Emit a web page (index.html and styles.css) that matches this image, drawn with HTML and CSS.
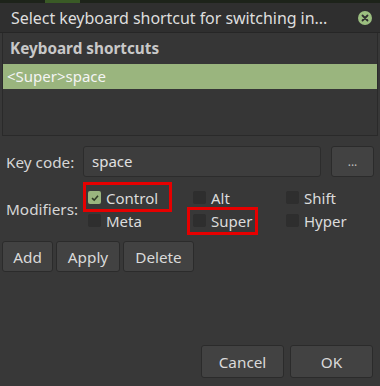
FILE: index.html
```html
<!DOCTYPE html>
<html>
<head>
<meta charset="utf-8">
<link rel="stylesheet" href="styles.css">
</head>
<body>
<div class="desk"><span class="leaf"></span></div>
<div class="dialog">
  <div class="titlebar">
    <span class="title">Select keyboard shortcut for switching in...</span>
    <span class="close"><svg width="14" height="14" viewBox="0 0 14 14"><circle cx="7" cy="7" r="7" fill="#9cbf80"/><path d="M4.5 4.5 L9.5 9.5 M9.5 4.5 L4.5 9.5" stroke="#2f2f2f" stroke-width="1.8" stroke-linecap="round"/></svg></span>
  </div>
  <div class="list">
    <div class="list-head">Keyboard shortcuts</div>
    <div class="list-row sel">&lt;Super&gt;space</div>
  </div>
  <div class="content">
    <div class="keyrow">
      <span class="lbl">Key code:</span>
      <div class="entry">space</div>
      <div class="btn dots">...</div>
    </div>
    <div class="modrow">
      <span class="lbl">Modifiers:</span>
      <div class="mods">
        <label class="chk hl hl-a"><span class="box on"><svg width="10" height="10" viewBox="0 0 10 10"><path d="M2 5.2 L4.2 7.2 L8 2.8" stroke="#2f3a26" stroke-width="1.6" fill="none"/></svg></span>Control</label>
        <label class="chk"><span class="box"></span>Alt</label>
        <label class="chk"><span class="box"></span>Shift</label>
        <label class="chk"><span class="box"></span>Meta</label>
        <label class="chk hl hl-b"><span class="box"></span>Super</label>
        <label class="chk"><span class="box"></span>Hyper</label>
      </div>
    </div>
    <div class="actions">
      <div class="btn w-add">Add</div>
      <div class="btn w-apply">Apply</div>
      <div class="btn w-delete">Delete</div>
    </div>
  </div>
  <div class="footer">
    <div class="btn big">Cancel</div>
    <div class="btn big">OK</div>
  </div>
</div>
</body>
</html>
```

FILE: styles.css
```css
html, body { margin: 0; padding: 0; }
body {
  width: 380px; height: 386px; overflow: hidden;
  background: #383838;
  font-family: "Noto Sans", "Open Sans", sans-serif;
  font-size: 15px;
  color: #dcdcdc;
}
.desk { height: 3px; background: #1d231a; position: relative; }
.leaf { position: absolute; left: 45px; top: 0; width: 35px; height: 3px; background: #3a5a26; }
.dialog { display: flex; flex-direction: column; height: 383px; }
.titlebar {
  height: 29px; background: #2f2f2f;
  display: flex; align-items: center; justify-content: space-between;
  padding: 0 8px 0 11px;
  border-bottom: 1px solid #262626;
}
.title { font-size: 16px; color: #dedede; letter-spacing: -0.05px; }
.close { display: flex; }
.list {
  margin: 0 2px; height: 102px;
  background: #363636;
  border: 1px solid #2a2a2a; border-top: none;
}
.list-head { height: 31px; line-height: 31px; padding-left: 7px; font-weight: bold; color: #c8c8c8; font-size: 15.3px; }
.list-row { height: 25px; line-height: 25px; padding-left: 4px; color: #f4f4f4; font-size: 15px; }
.list-row.sel { background: #9ab57e; }
.content { padding: 10px 4px 0 2px; }
.keyrow { display: flex; align-items: center; height: 31px; }
.lbl { width: 81px; padding-left: 4px; box-sizing: border-box; font-size: 15.3px; color: #d6d6d6; }
.entry {
  width: 238px; height: 31px; box-sizing: border-box;
  background: #3d3d3d; border: 1px solid #2c2c2c; border-radius: 3px;
  padding-left: 8px; line-height: 29px; font-size: 15px; color: #e0e0e0;
}
.btn {
  background: #424242; border: 1px solid #2b2b2b; border-radius: 3px;
  box-sizing: border-box; height: 31px;
  display: flex; align-items: center; justify-content: center;
  font-size: 15.3px; color: #dadada;
}
.dots { width: 43px; margin-left: 10px; font-size: 12px; color: #bdbdbd; }
.modrow { display: flex; align-items: center; margin-top: 7px; height: 50px; }
.mods { display: grid; grid-template-columns: 105px 93px 90px; grid-auto-rows: 23px; margin-left: 5px; }
.chk { display: flex; align-items: center; font-size: 15px; color: #dcdcdc; position: relative; }
.box { width: 13px; height: 13px; border-radius: 2px; background: #2e2e2e; margin-right: 5px; display: flex; align-items: center; justify-content: center; }
.box.on { background: #9ab57e; }
.chk.hl::after {
  content: ""; position: absolute;
  border: 3px solid #e60000; pointer-events: none;
}
.hl-a::after { left: -5px; top: -4px; right: 21px; bottom: -3px; }
.hl-b::after { left: -6px; top: -2px; right: 28px; bottom: -3px; }
.actions { display: flex; gap: 3px; margin-top: 7px; }
.w-add { width: 51px; }
.w-apply { width: 64px; }
.w-delete { width: 71px; }
.footer { margin-top: auto; display: flex; justify-content: flex-end; gap: 6px; padding: 0 7px 8px 0; }
.btn.big { width: 83px; height: 33px; }
```
